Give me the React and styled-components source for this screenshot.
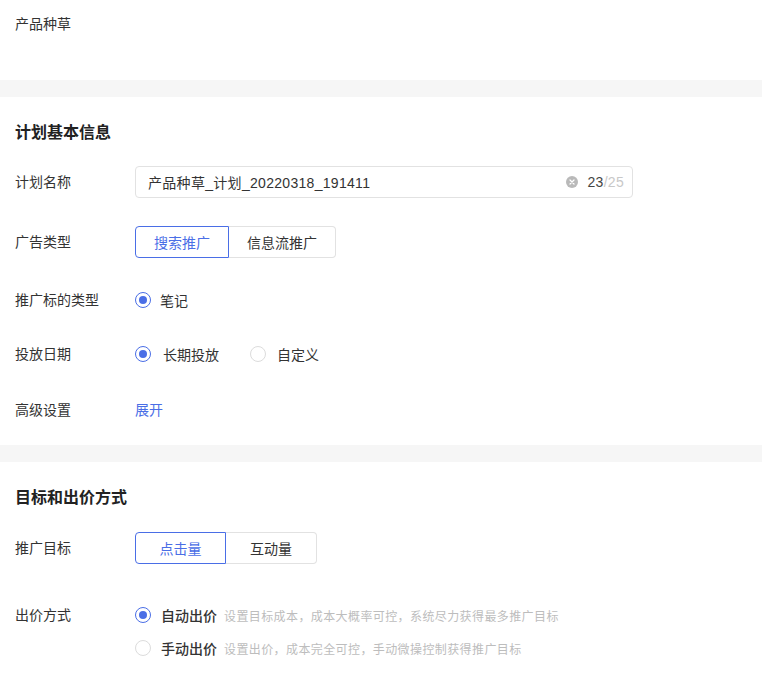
import React from "react";
import styled, { createGlobalStyle } from "styled-components";

const Global = createGlobalStyle`
  html, body { margin: 0; padding: 0; background: #fff; }
  body {
    font-family: "Liberation Sans", "Noto Sans CJK SC", sans-serif;
    color: #333;
    -webkit-font-smoothing: antialiased;
  }
`;

const BLUE = "#4a6ee6";

const Page = styled.div`
  width: 767px;
  min-height: 699px;
  display: flex;
  flex-direction: column;
`;

const TopSection = styled.div`
  height: 80px;
  box-sizing: border-box;
  padding: 14px 15px 0;
  font-size: 14px;
  line-height: 20px;
  color: #333;
`;

const Band = styled.div`
  height: 17px;
  margin-right: 5px;
  background: #f6f6f6;
  flex-shrink: 0;
`;

const Section = styled.div`
  padding: 25px 15px ${(p) => p.$bottom || 0}px;
  display: flex;
  flex-direction: column;
`;

const Title = styled.div`
  font-size: 16px;
  line-height: 22px;
  font-weight: 600;
  color: #222;
`;

const Row = styled.div`
  display: flex;
  align-items: ${(p) => (p.$top ? "flex-start" : "center")};
  min-height: ${(p) => (p.$top ? "auto" : "32px")};
  margin-top: ${(p) => p.$mt}px;
`;

const Label = styled.div`
  width: 120px;
  flex-shrink: 0;
  font-size: 14px;
  line-height: 20px;
  color: #333;
`;

const InputBox = styled.div`
  width: 498px;
  height: 32px;
  box-sizing: border-box;
  border: 1px solid #e2e2e2;
  border-radius: 4px;
  display: flex;
  align-items: center;
  padding: 0 8px 0 12px;
  font-size: 14px;
`;

const InputText = styled.span`
  flex: 1;
  color: #333;
  letter-spacing: 0.3px;
`;

const Clear = styled.span`
  width: 12px;
  height: 12px;
  border-radius: 50%;
  background: #b9b9b9;
  display: inline-flex;
  align-items: center;
  justify-content: center;
  margin-right: 9px;
`;

const Count = styled.span`
  color: #444;
  font-size: 14px;
  letter-spacing: 0.3px;
`;

const CountMax = styled.span`
  color: #c8c8c8;
`;

const BtnGroup = styled.div`
  display: flex;
`;

const SegBtn = styled.div`
  height: 32px;
  box-sizing: border-box;
  min-width: ${(p) => p.$min || 0}px;
  padding: 0 18px;
  display: flex;
  align-items: center;
  justify-content: center;
  font-size: 14px;
  color: ${(p) => (p.$active ? BLUE : "#333")};
  border: 1px solid ${(p) => (p.$active ? BLUE : "#e2e2e2")};
  border-left-width: ${(p) => (p.$active ? 1 : 0)}px;
  border-radius: ${(p) => (p.$first ? "4px 0 0 4px" : "0 4px 4px 0")};
  background: #fff;
`;

const Options = styled.div`
  display: flex;
  flex-direction: ${(p) => (p.$column ? "column" : "row")};
  gap: ${(p) => (p.$column ? 13 : 31)}px;
`;

const Option = styled.div`
  display: flex;
  align-items: center;
  height: 20px;
`;

const RadioCircle = styled.span`
  width: 16px;
  height: 16px;
  box-sizing: border-box;
  border-radius: 50%;
  border: ${(p) => (p.$checked ? `1.5px solid ${BLUE}` : "1px solid #dcdcdc")};
  display: inline-flex;
  align-items: center;
  justify-content: center;
  flex-shrink: 0;
  &::after {
    content: "";
    width: 8px;
    height: 8px;
    border-radius: 50%;
    background: ${(p) => (p.$checked ? BLUE : "transparent")};
  }
`;

const OptText = styled.span`
  margin-left: ${(p) => p.$ml || 10}px;
  font-size: 14px;
  color: #333;
  font-weight: ${(p) => (p.$strong ? 500 : 400)};
`;

const Desc = styled.span`
  margin-left: 7px;
  font-size: 12px;
  letter-spacing: 0.4px;
  color: #bdbdbd;
`;

const LinkText = styled.span`
  font-size: 14px;
  line-height: 20px;
  color: ${BLUE};
`;

const Radio = ({ checked, children, ml, strong }) => (
  <Option>
    <RadioCircle $checked={checked} />
    <OptText $ml={ml} $strong={strong}>{children}</OptText>
  </Option>
);

export default function App() {
  return (
    <>
      <Global />
      <Page>
        <TopSection>产品种草</TopSection>
        <Band />
        <Section $bottom={19}>
          <Title>计划基本信息</Title>
          <Row $mt={22}>
            <Label>计划名称</Label>
            <InputBox>
              <InputText>产品种草_计划_20220318_191411</InputText>
              <Clear>
                <svg width="6" height="6" viewBox="0 0 6 6">
                  <path d="M1 1L5 5M5 1L1 5" stroke="#fff" strokeWidth="1.2" strokeLinecap="round" />
                </svg>
              </Clear>
              <Count>
                23<CountMax>/25</CountMax>
              </Count>
            </InputBox>
          </Row>
          <Row $mt={28}>
            <Label>广告类型</Label>
            <BtnGroup>
              <SegBtn $active $first>搜索推广</SegBtn>
              <SegBtn>信息流推广</SegBtn>
            </BtnGroup>
          </Row>
          <Row $mt={26}>
            <Label>推广标的类型</Label>
            <Options>
              <Radio checked ml={9}>笔记</Radio>
            </Options>
          </Row>
          <Row $mt={22}>
            <Label>投放日期</Label>
            <Options>
              <Radio checked ml={12}>长期投放</Radio>
              <Radio ml={11}>自定义</Radio>
            </Options>
          </Row>
          <Row $mt={24}>
            <Label>高级设置</Label>
            <LinkText>展开</LinkText>
          </Row>
        </Section>
        <Band />
        <Section>
          <Title>目标和出价方式</Title>
          <Row $mt={23}>
            <Label>推广目标</Label>
            <BtnGroup>
              <SegBtn $active $first $min={91}>点击量</SegBtn>
              <SegBtn $min={91}>互动量</SegBtn>
            </BtnGroup>
          </Row>
          <Row $top $mt={41}>
            <Label>出价方式</Label>
            <Options $column>
              <Option>
                <RadioCircle $checked />
                <OptText $strong>自动出价</OptText>
                <Desc>设置目标成本，成本大概率可控，系统尽力获得最多推广目标</Desc>
              </Option>
              <Option>
                <RadioCircle />
                <OptText $strong>手动出价</OptText>
                <Desc>设置出价，成本完全可控，手动微操控制获得推广目标</Desc>
              </Option>
            </Options>
          </Row>
        </Section>
      </Page>
    </>
  );
}
